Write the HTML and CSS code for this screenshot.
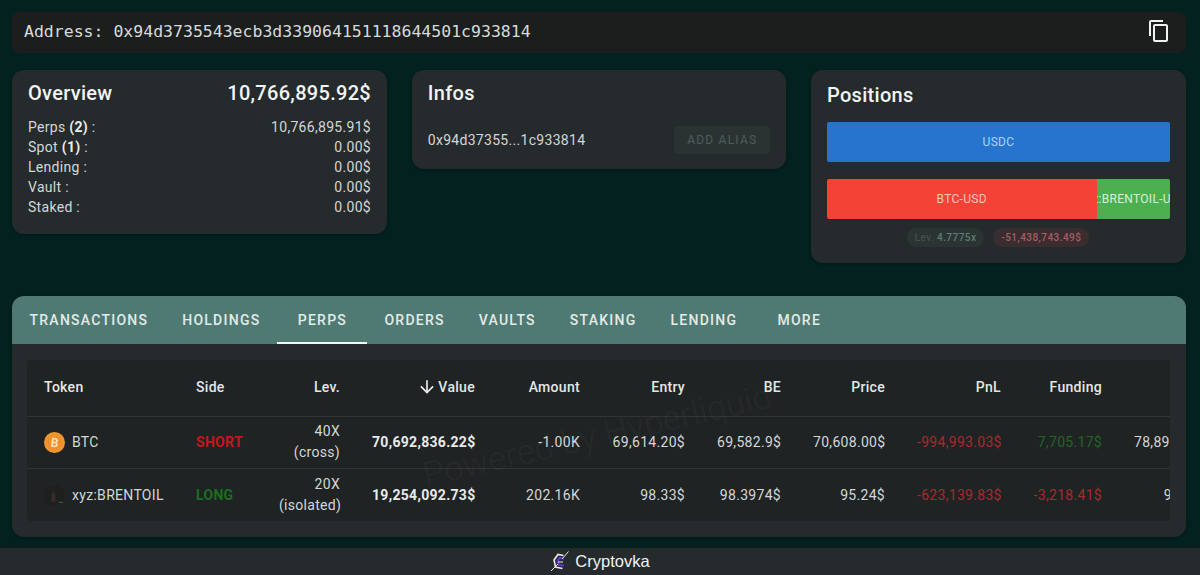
FILE: index.html
```html
<!DOCTYPE html>
<html lang="en">
<head>
  <meta charset="UTF-8">
  <meta name="viewport" content="width=device-width, initial-scale=1.0">
  <title>Cryptovka</title>
  <link rel="stylesheet" href="styles.css">
</head>
<body>
  <main class="page">
    <div class="address-bar">
      <span class="address-text">Address: 0x94d3735543ecb3d339064151118644501c933814</span>
      <svg class="copy-icon" viewBox="0 0 24 24"><path d="M16 1H4c-1.1 0-2 .9-2 2v14h2V3h12V1zm3 4H8c-1.1 0-2 .9-2 2v14c0 1.1.9 2 2 2h11c1.1 0 2-.9 2-2V7c0-1.1-.9-2-2-2zm0 16H8V7h11v14z"/></svg>
    </div>

    <div class="cards">
      <section class="card overview">
        <div class="card-head">
          <h2>Overview</h2>
          <span class="total">10,766,895.92$</span>
        </div>
        <div class="line"><span>Perps <b>(2)</b> :</span><span>10,766,895.91$</span></div>
        <div class="line"><span>Spot <b>(1)</b> :</span><span>0.00$</span></div>
        <div class="line"><span>Lending :</span><span>0.00$</span></div>
        <div class="line"><span>Vault :</span><span>0.00$</span></div>
        <div class="line"><span>Staked :</span><span>0.00$</span></div>
      </section>

      <section class="card infos">
        <div class="card-head">
          <h2>Infos</h2>
        </div>
        <div class="alias-row">
          <span>0x94d37355...1c933814</span>
          <button class="alias-btn" disabled>ADD ALIAS</button>
        </div>
      </section>

      <section class="card positions">
        <h2>Positions</h2>
        <div class="bar bar-usdc">USDC</div>
        <div class="split">
          <div class="bar bar-btc">BTC-USD</div>
          <div class="bar bar-oil"><span>xyz:BRENTOIL-USD</span></div>
        </div>
        <div class="chips">
          <span class="chip"><i>Lev.</i> <b>4.7775x</b></span>
          <span class="chip chip-red">-51,438,743.49$</span>
        </div>
      </section>
    </div>

    <section class="panel">
      <nav class="tabs">
        <a class="tab">Transactions</a>
        <a class="tab">Holdings</a>
        <a class="tab active">Perps</a>
        <a class="tab">Orders</a>
        <a class="tab">Vaults</a>
        <a class="tab">Staking</a>
        <a class="tab">Lending</a>
        <a class="tab">More</a>
      </nav>
      <div class="table-wrap">
        <table class="perps">
          <colgroup>
            <col class="c-token"><col class="c-side"><col class="c-lev"><col class="c-value"><col class="c-amount"><col class="c-entry"><col class="c-be"><col class="c-price"><col class="c-pnl"><col class="c-funding"><col class="c-extra">
          </colgroup>
          <thead>
            <tr>
              <th class="left first">Token</th>
              <th class="left">Side</th>
              <th>Lev.</th>
              <th><svg class="sort-icon" viewBox="0 0 24 24"><path d="M20 12l-1.41-1.41L13 16.17V4h-2v12.17l-5.58-5.59L4 12l8 8 8-8z"/></svg> Value</th>
              <th>Amount</th>
              <th>Entry</th>
              <th>BE</th>
              <th>Price</th>
              <th>PnL</th>
              <th>Funding</th>
              <th></th>
            </tr>
          </thead>
          <tbody>
            <tr>
              <td class="left first"><div class="token">
                <svg class="coin" viewBox="0 0 20 20"><circle cx="10" cy="10" r="10" fill="#f2962f"/><circle cx="10" cy="10" r="7.500" fill="#ee8f2a"/><path transform="rotate(8 10 10)" d="M7 5.500h4c2.200 0 2.900 3.400 .9 4.300 2.400 .7 1.900 4.700-.9 4.700H7zM9 7.400v1.700h1.500c1 0 1-1.700 0-1.700zM9 10.800v1.900h1.800c1.100 0 1.100-1.900 0-1.900z" fill="#fbdcae" fill-rule="evenodd"/></svg>
                BTC</div></td>
              <td class="left side short">SHORT</td>
              <td>40X<br>(cross)</td>
              <td class="strong">70,692,836.22$</td>
              <td>-1.00K</td>
              <td>69,614.20$</td>
              <td>69,582.9$</td>
              <td>70,608.00$</td>
              <td class="neg">-994,993.03$</td>
              <td class="pos">7,705.17$</td>
              <td>78,891,204.36$</td>
            </tr>
            <tr>
              <td class="left first"><div class="token">
                <svg class="coin" viewBox="0 0 20 20"><circle cx="10" cy="10" r="10" fill="#1e1f1f"/><path d="M8.500 5l2.500 5v6H7v-6z" fill="#3a2b28"/><path d="M14 16h4v1.200h-4z" fill="#4a4a48"/></svg>
                xyz:BRENTOIL</div></td>
              <td class="left side long">LONG</td>
              <td>20X<br>(isolated)</td>
              <td class="strong">19,254,092.73$</td>
              <td>202.16K</td>
              <td>98.33$</td>
              <td>98.3974$</td>
              <td>95.24$</td>
              <td class="neg">-623,139.83$</td>
              <td class="neg">-3,218.41$</td>
              <td>925.0912$</td>
            </tr>
          </tbody>
        </table>
        <div class="watermark">Powered by Hyperliquid</div>
      </div>
    </section>
  </main>

  <footer class="footer">
    <svg class="logo" viewBox="0 0 20 21">
      <path d="M13.500 4.500L8 3.500 4 9l1.500 7 7 1.500" fill="none" stroke="#e8e8ee" stroke-width="1.600"/>
      <path d="M14 7.500L9.500 7 7.500 10.500 9 14l5 .5" fill="none" stroke="#5f33d0" stroke-width="2.200"/>
      <path d="M1 20L8 13M12 8l6.500-7.500" stroke="#e8e8ee" stroke-width="1"/>
      <path d="M8 11h5" stroke="#e8e8ee" stroke-width="1"/>
    </svg>
    <span>Cryptovka</span>
  </footer>
</body>
</html>
```

FILE: styles.css
```css
* {
  box-sizing: border-box;
}
body, html {
  padding: 0;
  margin: 0;
}
body {
  width: 1200px;
  height: 575px;
  overflow: hidden;
  background-color: #03211e;
  color: #e6e8e8;
  font-family: Roboto, sans-serif;
  font-size: 14px;
  letter-spacing: 0.3px;
}
.page {
  padding: 12px 14px 0 12px;
  height: 548px;
}

.address-bar {
  height: 41px;
  display: flex;
  align-items: center;
  justify-content: space-between;
  padding: 0 15px 2px 12px;
  background-color: #1b1e1d;
  border-radius: 7px;
  letter-spacing: 0;
}
.address-text {
  font-family: "DejaVu Sans Mono", monospace;
  font-size: 16.5px;
  color: #d8dada;
}
.copy-icon {
  width: 24px;
  height: 24px;
  margin-bottom: 1px;
  fill: #f2f2f2;
}

.cards {
  display: grid;
  grid-template-columns: 375px 374.500px 375px;
  column-gap: 24.750px;
  align-items: start;
  margin-top: 17px;
}
.card {
  background-color: #252b2c;
  border-radius: 12px;
  padding: 9px 16px 17px;
  box-shadow: 0 1px 3px rgba(0, 0, 0, 0.25);
}
.card h2 {
  margin: 0;
  font-size: 20px;
  line-height: 28px;
  font-weight: 500;
  color: #f2f4f4;
}
.card-head {
  display: flex;
  justify-content: space-between;
  margin-bottom: 10px;
}
.total {
  font-size: 20px;
  line-height: 28px;
  font-weight: 500;
  color: #f2f4f4;
}
.line {
  display: flex;
  justify-content: space-between;
  line-height: 20px;
  color: #d4d7d7;
}
.line b {
  font-weight: 700;
  color: #eceeee;
}

.infos {
  height: 99px;
}
.alias-row {
  display: flex;
  align-items: center;
  justify-content: space-between;
  margin-top: 19px;
  color: #d4d7d7;
}
.alias-btn {
  width: 96px;
  height: 28px;
  border: 0;
  border-radius: 4px;
  background-color: #2b3332;
  color: #4d5d59;
  font-family: Roboto, sans-serif;
  font-size: 12px;
  font-weight: 400;
  letter-spacing: 1.2px;
}

.positions {
  height: 193px;
  padding-top: 11px;
}
.bar {
  height: 40px;
  display: flex;
  align-items: center;
  justify-content: center;
  font-size: 12px;
  overflow: hidden;
  white-space: nowrap;
}
.bar-usdc {
  margin-top: 13px;
  border-radius: 2px;
  background-color: #2774cc;
  color: #a9d3fb;
}
.split {
  display: flex;
  margin-top: 17px;
}
.bar-btc {
  width: 269.500px;
  border-radius: 2px 0 0 2px;
  background-color: #f44336;
  color: #fbc4bd;
}
.bar-oil {
  flex: 1;
  border-radius: 0 2px 2px 0;
  background-color: #4caf50;
  color: #d9f0da;
}
.chips {
  display: flex;
  justify-content: center;
  gap: 9px;
  margin-top: 9px;
  padding-right: 1px;
}
.chip {
  height: 19px;
  padding: 0 8px;
  border-radius: 10px;
  background-color: #2c3333;
  font-size: 10px;
  line-height: 19px;
  font-weight: 500;
  letter-spacing: 0.45px;
}
.chip i {
  font-style: normal;
  font-weight: 400;
  color: #49534f;
}
.chip b {
  font-weight: 500;
  color: #5d7d70;
}
.chip-red {
  background-color: #3a2d30;
  color: #a85c66;
}

.panel {
  margin-top: 33px;
  height: 241px;
  background-color: #252b2c;
  border-radius: 12px;
  overflow: hidden;
  box-shadow: 0 1px 3px rgba(0, 0, 0, 0.25);
}
.tabs {
  display: flex;
  height: 48px;
  background-color: #4f7a73;
}
.tab {
  min-width: 90px;
  padding: 0 16.500px 0 17.500px;
  display: flex;
  align-items: center;
  justify-content: center;
  font-size: 14px;
  font-weight: 500;
  letter-spacing: 1.25px;
  text-transform: uppercase;
  color: #e3ebe9;
}
.tab.active {
  border-bottom: 2px solid #f5f7f7;
  padding-top: 2px;
}

.table-wrap {
  position: relative;
  margin: 16px 16px 0 15px;
  height: 161px;
  overflow: hidden;
  background-color: #1f2324;
  border-radius: 4px;
}
.perps {
  table-layout: fixed;
  width: 1222px;
  border-collapse: collapse;
}
.c-token { width: 153px; }
.c-side { width: 83px; }
.c-lev { width: 93px; }
.c-value { width: 135px; }
.c-amount { width: 105px; }
.c-entry { width: 105px; }
.c-be { width: 96px; }
.c-price { width: 104px; }
.c-pnl { width: 116px; }
.c-funding { width: 101px; }
.c-extra { width: 131px; }
.perps th,
.perps td {
  padding: 0 16px;
  text-align: right;
  white-space: nowrap;
  font-size: 14px;
  line-height: 21px;
}
.perps th {
  height: 56px;
  font-weight: 500;
  color: #e4e6e6;
}
.perps td {
  height: 52px;
  color: #d4d7d7;
  border-top: 1px solid #2f3536;
}
.perps tbody tr:last-child td {
  padding-top: 2px;
}
.perps .left {
  text-align: left;
}
.perps .first {
  padding-left: 17px;
}
.perps .strong {
  font-weight: 700;
  letter-spacing: 0.3px;
  color: #e8eaea;
}
.perps .neg {
  color: #a92a2a;
}
.perps .pos {
  color: #256325;
}
.perps .side {
  font-weight: 700;
}
.perps .short {
  color: #c8171b;
}
.perps .long {
  color: #1a6f20;
}
.sort-icon {
  width: 20px;
  height: 20px;
  margin-right: -2px;
  fill: #eceeee;
  vertical-align: -5px;
}
.token {
  display: flex;
  align-items: center;
  gap: 7px;
}
.coin {
  width: 21px;
  height: 21px;
  flex: none;
}

.watermark {
  position: absolute;
  left: 392px;
  top: 55px;
  font-size: 34px;
  font-weight: 300;
  white-space: nowrap;
  color: rgba(255, 255, 255, 0.05);
  transform: rotate(-13deg);
  pointer-events: none;
}

.footer {
  height: 27px;
  display: flex;
  align-items: center;
  justify-content: center;
  gap: 5px;
  background-color: #252b2c;
  font-family: "Liberation Sans", sans-serif;
  font-size: 16.500px;
  letter-spacing: 0;
  color: #f0f2f2;
}
.logo {
  width: 20px;
  height: 21px;
}
```
